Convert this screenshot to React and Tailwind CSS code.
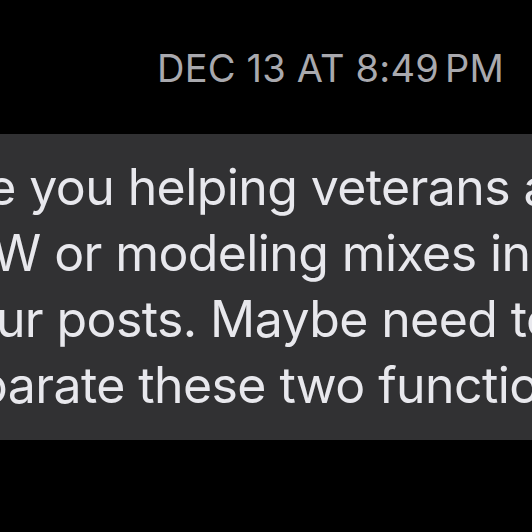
import React from 'react';

// Cropped iMessage thread: timestamp + one received bubble clipped at both edges
const lines = [
  { text: 'Are you helping veterans and', offset: 'ml-[-64px]' },
  { text: 'W or modeling mixes in', offset: 'ml-[-8px]' },
  { text: 'your posts. Maybe need to', offset: 'ml-[-60px]' },
  { text: 'separate these two functions', offset: 'ml-[-77px]' },
];

export default function App() {
  return (
    <div
      className="w-[532px] h-[532px] bg-black overflow-hidden"
      style={{ fontFamily: 'Inter, "Noto Sans", sans-serif' }}
    >
      <div className="pt-[49px] pr-[28px] flex justify-end">
        <div className="text-[38px] leading-[38px] text-[#a9a9ae] tracking-[0.2px]">
          DEC 13 AT 8:49<span className="ml-[6px]">PM</span>
        </div>
      </div>

      <div className="mt-[47px] bg-[#313133] pt-[20px] pb-[22px] overflow-hidden">
        {lines.map((line) => (
          <div
            key={line.text}
            className={`whitespace-nowrap text-[50px] leading-[66px] tracking-[-0.6px] text-[#e8e8ed] ${line.offset}`}
          >
            {line.text}
          </div>
        ))}
      </div>
    </div>
  );
}
